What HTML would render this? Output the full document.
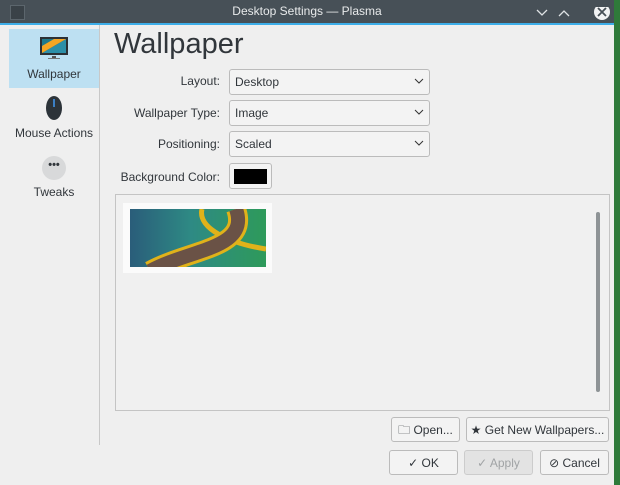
<!DOCTYPE html><html><head><style>
body{margin:0;width:620px;height:485px;background:#2f7a3a;position:relative;overflow:hidden;font-family:"Liberation Sans",sans-serif;font-size:12px;color:#31363b}
.win{position:absolute;left:0;top:0;width:614px;height:485px;background:#efefef}
.tb{position:absolute;left:0;top:0;width:614px;height:23px;background:#475057;border-bottom:2px solid #3daee9;color:#e8eaeb;text-align:center;line-height:23px;font-size:12px}
.a{position:absolute}
.lbl{position:absolute;text-align:right;width:210px;left:10px}
.cb{position:absolute;left:229px;width:199px;height:24px;border:1px solid #bbb;border-radius:3px;background:#f3f3f3;line-height:24px;box-sizing:content-box}
.cb span{margin-left:5px}
.cb svg{position:absolute;right:5px;top:8px}
.btn{position:absolute;height:25px;border:1px solid #bbb;border-radius:3px;background:#f3f3f3;line-height:25px;text-align:center;box-sizing:border-box}
</style></head><body>
<div class="win">
<div class="tb">Desktop Settings — Plasma
<div class="a" style="left:10px;top:5px;width:13px;height:13px;background:#3a4248;border:1px solid #5c666d"></div>
<svg class="a" style="left:535px;top:7px" width="80" height="14"><path d="M2 3l5 5 5-5" stroke="#dfe2e4" fill="none" stroke-width="1.3"/><path d="M24 9l5-5 5 5" stroke="#dfe2e4" fill="none" stroke-width="1.3"/><circle cx="67" cy="5" r="8" fill="#f2f3f4"/><path d="M63 1l8 8M71 1l-8 8" stroke="#475057" stroke-width="1.8"/></svg>
</div>
<div class="a" style="left:99px;top:25px;width:1px;height:420px;background:#c8c8c8"></div>
<div class="a" style="left:9px;top:29px;width:90px;height:59px;background:#bde0f2"></div>
<svg class="a" style="left:39px;top:36px" width="30" height="26"><rect x="1" y="1" width="28" height="18" fill="#2b3035"/><polygon points="3,17 27,3 27,17" fill="#2d8fa8"/><polygon points="3,3 27,3 3,17" fill="#f6a623"/><polygon points="3,3 15,3 3,10" fill="#1f7a8c"/><rect x="13" y="20" width="4" height="2" fill="#555"/><rect x="9" y="22" width="12" height="1" fill="#777"/></svg>
<div class="a" style="left:9px;top:67px;width:90px;text-align:center">Wallpaper</div>
<svg class="a" style="left:44px;top:95px" width="20" height="26"><ellipse cx="10" cy="13" rx="8" ry="12" fill="#2c3339"/><rect x="9" y="4" width="2" height="8" fill="#3b7fc4"/></svg>
<div class="a" style="left:9px;top:126px;width:90px;text-align:center">Mouse Actions</div>
<div class="a" style="left:42px;top:156px;width:24px;height:24px;border-radius:50%;background:#d8d9da;text-align:center;line-height:18px;font-weight:bold;font-size:11px">•••</div>
<div class="a" style="left:9px;top:185px;width:90px;text-align:center">Tweaks</div>
<div class="a" style="left:114px;top:28px;font-size:29px">Wallpaper</div>
<div class="lbl" style="top:74px">Layout:</div>
<div class="lbl" style="top:106px">Wallpaper Type:</div>
<div class="lbl" style="top:137px">Positioning:</div>
<div class="lbl" style="top:170px">Background Color:</div>
<div class="cb" style="top:69px"><span>Desktop</span><svg width="10" height="7"><path d="M1 1l4 4 4-4" stroke="#333" fill="none"/></svg></div>
<div class="cb" style="top:100px"><span>Image</span><svg width="10" height="7"><path d="M1 1l4 4 4-4" stroke="#333" fill="none"/></svg></div>
<div class="cb" style="top:131px"><span>Scaled</span><svg width="10" height="7"><path d="M1 1l4 4 4-4" stroke="#333" fill="none"/></svg></div>
<div class="a" style="left:229px;top:163px;width:41px;height:24px;border:1px solid #bbb;border-radius:3px;background:#f3f3f3"><div style="margin:5px 4px;height:15px;background:#000"></div></div>
<div class="a" style="left:115px;top:194px;width:493px;height:215px;border:1px solid #c4c4c4;background:#f0f0f0"></div>
<div class="a" style="left:123px;top:203px;width:149px;height:70px;background:#fbfbfb"></div>
<svg class="a" style="left:130px;top:209px" width="136" height="58"><defs><linearGradient id="g" x1="0" x2="1"><stop offset="0" stop-color="#2a5d7a"/><stop offset=".45" stop-color="#2e8a84"/><stop offset="1" stop-color="#2e9a5a"/></linearGradient></defs><rect width="136" height="58" fill="url(#g)"/><path d="M72 0c-5 20 30 35 64 40" stroke="#e0b21a" stroke-width="5" fill="none"/><path d="M20 62C60 40 120 40 106 0" stroke="#e0b21a" stroke-width="20" fill="none"/><path d="M20 62C60 40 120 40 106 0" stroke="#6a5246" stroke-width="14" fill="none"/></svg>
<div class="a" style="left:596px;top:212px;width:4px;height:180px;border-radius:2px;background:#8e9396"></div>
<div class="btn" style="left:391px;top:417px;width:69px">&#128448; Open...</div>
<div class="btn" style="left:466px;top:417px;width:143px">★ Get New Wallpapers...</div>
<div class="btn" style="left:389px;top:450px;width:69px">✓ OK</div>
<div class="btn" style="left:464px;top:450px;width:69px;background:#e3e3e3;color:#a0a3a5;border-color:#ccc">✓ Apply</div>
<div class="btn" style="left:540px;top:450px;width:69px">⊘ Cancel</div>
</div>
</body></html>
